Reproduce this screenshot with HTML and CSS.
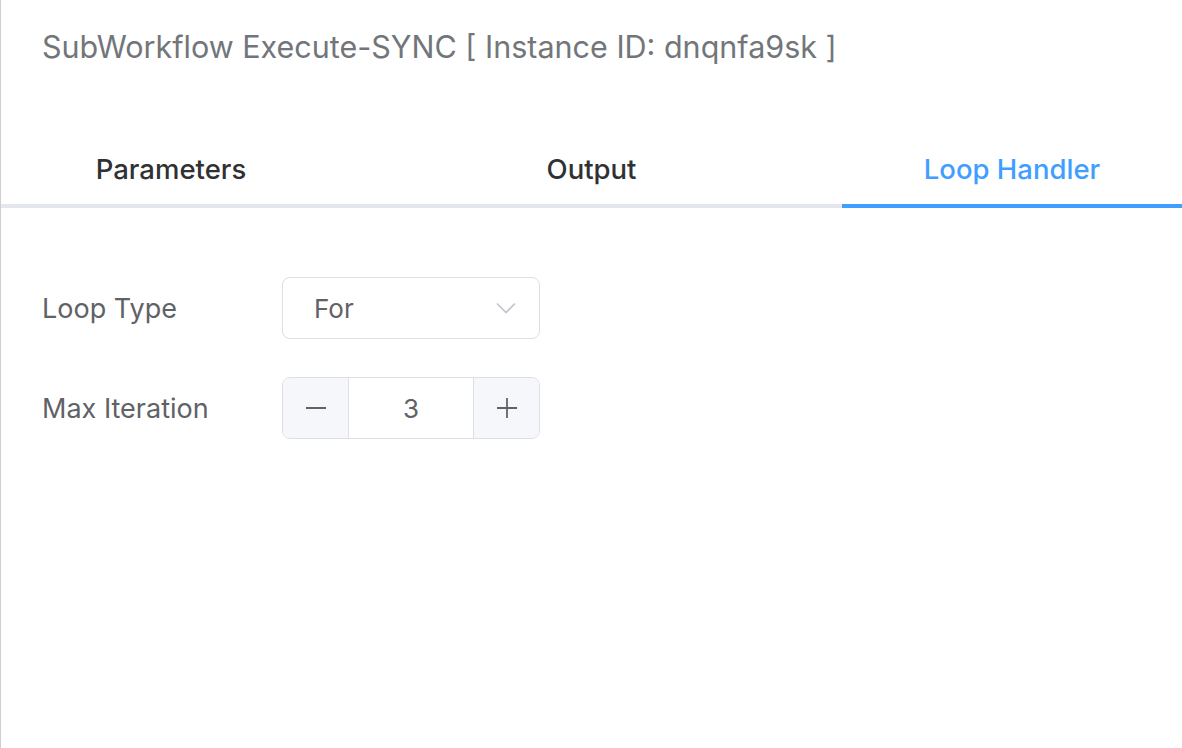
FILE: index.html
```html
<!DOCTYPE html>
<html>
<head>
<meta charset="utf-8">
<link rel="stylesheet" href="styles.css">
</head>
<body>
<div class="drawer">
  <header class="drawer-header">
    <span class="title">SubWorkflow Execute-SYNC [ Instance ID: dnqnfa9sk ]</span>
  </header>
  <nav class="tabs">
    <div class="tab">Parameters</div>
    <div class="tab">Output</div>
    <div class="tab active">Loop Handler</div>
  </nav>
  <section class="form">
    <div class="row">
      <label class="label">Loop Type</label>
      <div class="select">
        <span class="select-value">For</span>
        <svg class="chevron" width="20" height="12" viewBox="0 0 20 12"><path d="M1 1.5 L10 10.5 L19 1.5" fill="none" stroke="#c0c4cc" stroke-width="1.6"/></svg>
      </div>
    </div>
    <div class="row">
      <label class="label">Max Iteration</label>
      <div class="number">
        <span class="btn minus"><svg width="22" height="22" viewBox="0 0 22 22"><path d="M1 11 H21" stroke="#606266" stroke-width="1.8"/></svg></span>
        <span class="num-value">3</span>
        <span class="btn plus"><svg width="22" height="22" viewBox="0 0 22 22"><path d="M1 11 H21 M11 1 V21" stroke="#606266" stroke-width="1.8"/></svg></span>
      </div>
    </div>
  </section>
</div>
</body>
</html>
```

FILE: styles.css
```css
html, body {
  margin: 0;
  padding: 0;
  background: #ffffff;
}
body {
  font-family: Inter, "Noto Sans", "Liberation Sans", sans-serif;
}
.drawer {
  height: 748px;
  box-sizing: border-box;
  border-left: 1px solid #cfcfcf;
  display: flex;
  flex-direction: column;
}
.drawer-header {
  padding: 27px 0 0 41px;
  height: 95px;
  box-sizing: border-box;
}
.title {
  font-size: 30.5px;
  line-height: 40px;
  color: #72767b;
}
.tabs {
  display: flex;
  justify-content: space-between;
  border-bottom: 4px solid #e4e7ed;
  height: 113px;
  box-sizing: border-box;
}
.tab {
  width: 340px;
  text-align: center;
  font-size: 27.5px;
  font-weight: 500;
  color: #303133;
  padding-top: 56px;
  line-height: 36px;
  box-sizing: border-box;
  margin-bottom: -4px;
  border-bottom: 4px solid transparent;
}
.tab.active {
  color: #409eff;
  border-bottom-color: #409eff;
}
.form {
  padding: 69px 0 0 41px;
  display: flex;
  flex-direction: column;
  gap: 38px;
}
.row {
  display: flex;
  align-items: center;
}
.label {
  width: 240px;
  font-size: 27px;
  color: #606266;
}
.select {
  width: 258px;
  height: 62px;
  box-sizing: border-box;
  border: 1.5px solid #dcdfe6;
  border-radius: 8px;
  display: flex;
  align-items: center;
  justify-content: space-between;
  padding: 0 23px 0 31px;
}
.select-value {
  font-size: 26px;
  color: #606266;
}
.number {
  width: 258px;
  height: 62px;
  box-sizing: border-box;
  border: 1.5px solid #dcdfe6;
  border-radius: 8px;
  display: flex;
  overflow: hidden;
}
.btn {
  width: 65px;
  background: #f5f7fa;
  display: flex;
  align-items: center;
  justify-content: center;
}
.minus { border-right: 1.5px solid #dcdfe6; }
.plus { border-left: 1.5px solid #dcdfe6; }
.num-value {
  flex: 1;
  display: flex;
  align-items: center;
  justify-content: center;
  font-size: 26px;
  color: #606266;
}
```
